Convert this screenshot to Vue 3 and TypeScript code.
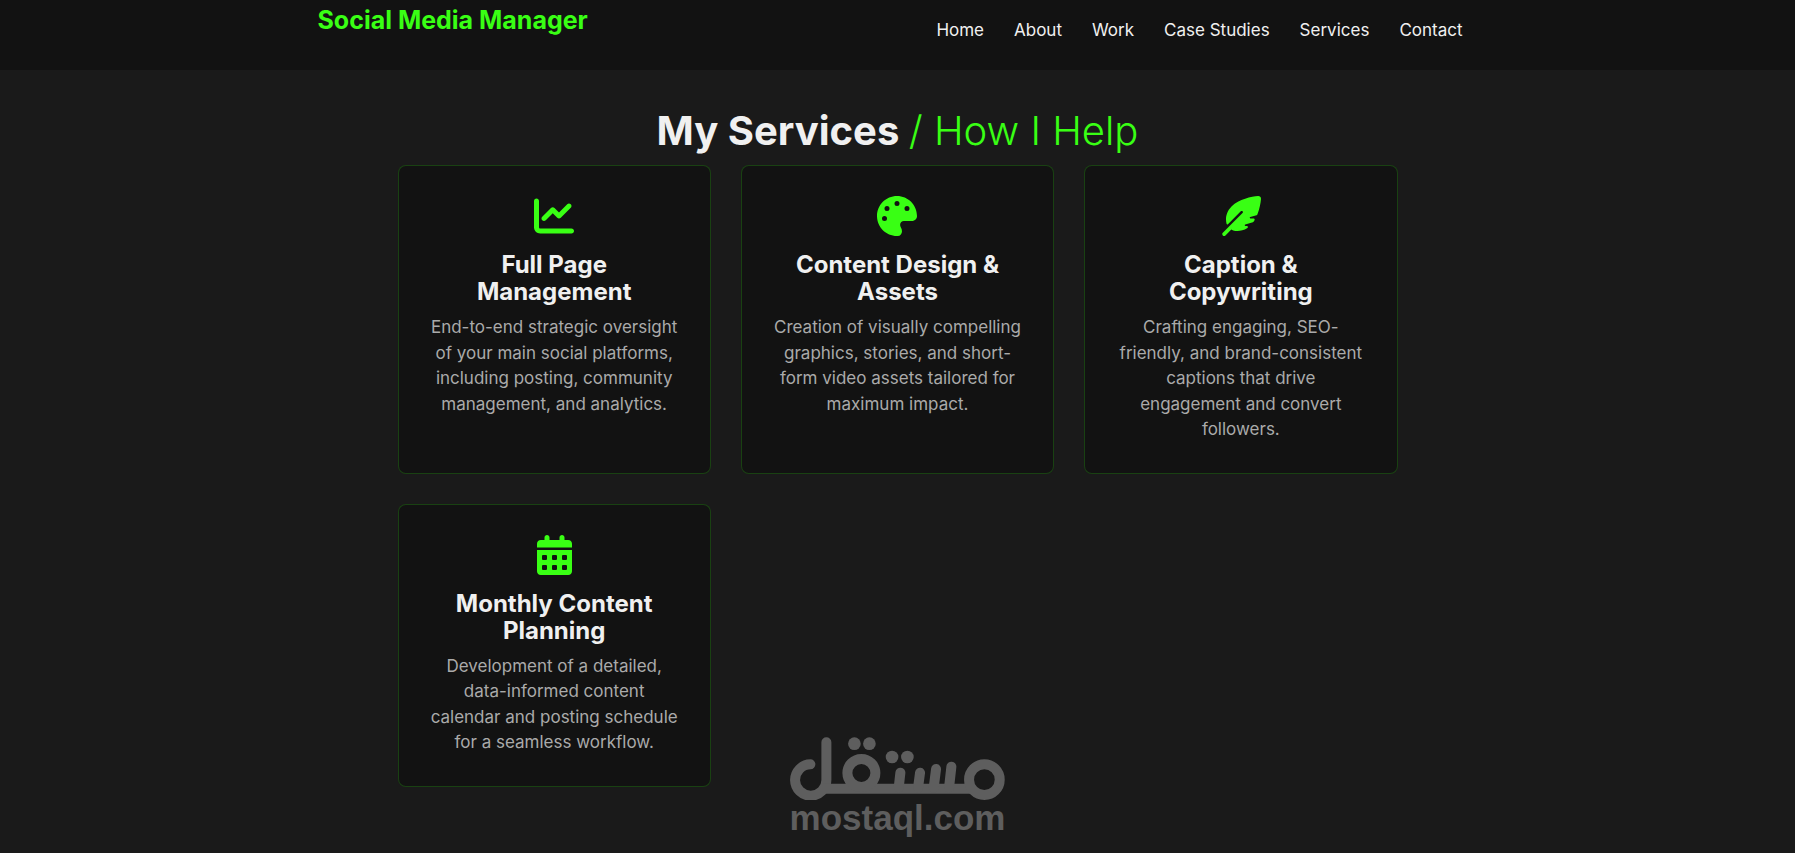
<script setup lang="ts">
interface NavLink {
  label: string
  href: string
}

interface Service {
  title: string
  text: string
  viewBox: string
  icon: string
}

const links: NavLink[] = [
  { label: 'Home', href: '#home' },
  { label: 'About', href: '#about' },
  { label: 'Work', href: '#work' },
  { label: 'Case Studies', href: '#case-studies' },
  { label: 'Services', href: '#services' },
  { label: 'Contact', href: '#contact' },
]

const services: Service[] = [
  {
    title: 'Full Page Management',
    text: 'End-to-end strategic oversight of your main social platforms, including posting, community management, and analytics.',
    viewBox: '0 0 512 512',
    icon: 'M64 64c0-17.7-14.3-32-32-32S0 46.3 0 64V400c0 44.2 35.8 80 80 80H480c17.7 0 32-14.3 32-32s-14.3-32-32-32H80c-8.8 0-16-7.2-16-16V64zm406.6 86.6c12.5-12.5 12.5-32.8 0-45.3s-32.8-12.5-45.3 0L320 210.7l-57.4-57.4c-12.5-12.5-32.8-12.5-45.3 0l-112 112c-12.5 12.5-12.5 32.8 0 45.3s32.8 12.5 45.3 0L240 221.3l57.4 57.4c12.5 12.5 32.8 12.5 45.3 0l128-128z',
  },
  {
    title: 'Content Design & Assets',
    text: 'Creation of visually compelling graphics, stories, and short-form video assets tailored for maximum impact.',
    viewBox: '0 0 512 512',
    icon: 'M512 256c0 .9 0 1.8 0 2.7c-.4 36.5-33.6 61.3-70.1 61.3H344c-26.5 0-48 21.5-48 48c0 3.4 .4 6.7 1 9.9c2.1 10.2 6.5 20 10.8 29.9c6.1 13.8 12.1 27.5 12.1 42c0 31.8-21.6 60.7-53.4 62c-3.5 .1-7 .2-10.6 .2C114.6 512 0 397.4 0 256S114.6 0 256 0S512 114.6 512 256zM128 288a32 32 0 1 0 -64 0 32 32 0 1 0 64 0zm0-96a32 32 0 1 0 0-64 32 32 0 1 0 0 64zM288 96a32 32 0 1 0 -64 0 32 32 0 1 0 64 0zm96 96a32 32 0 1 0 0-64 32 32 0 1 0 0 64z',
  },
  {
    title: 'Caption & Copywriting',
    text: 'Crafting engaging, SEO-friendly, and brand-consistent captions that drive engagement and convert followers.',
    viewBox: '0 0 512 512',
    icon: 'M278.5 215.6L23 471c-9.4 9.4-9.4 24.6 0 33.9s24.6 9.4 33.9 0l74.8-74.8c7.4 4.6 15.3 8.2 23.8 10.5C200.3 452.8 270 454.5 338 409.4c12.2-8.1 5.8-25.4-8.8-25.4l-16.1 0c-5.1 0-9.2-4.1-9.2-9.2c0-4.1 2.7-7.6 6.5-8.8l97.7-29.3c3.4-1 6.4-3.1 8.4-6.1c4.4-6.4 8.6-12.9 12.6-19.6c6.2-10.3-1.5-23-13.5-23l-38.6 0c-5.1 0-9.2-4.1-9.2-9.2c0-4.1 2.7-7.6 6.5-8.8l80.9-24.3c4.6-1.4 8.4-4.8 10.2-9.3C494.5 163 507.8 86.1 511.9 36.8c.8-9.9-3-19.6-10-26.6s-16.7-10.8-26.6-10C391.5 7 228.5 40.5 137.4 131.6C57.3 211.7 56.7 302.3 71.3 356.4c2.1 7.9 12 9.6 17.8 3.8L253.6 195.8c6.2-6.2 16.4-6.2 22.6 0c5.4 5.4 6.1 13.6 2.2 19.8z',
  },
  {
    title: 'Monthly Content Planning',
    text: 'Development of a detailed, data-informed content calendar and posting schedule for a seamless workflow.',
    viewBox: '0 0 448 512',
    icon: 'M128 0c17.7 0 32 14.3 32 32V64H288V32c0-17.7 14.3-32 32-32s32 14.3 32 32V64h48c26.5 0 48 21.5 48 48v48H0V112C0 85.5 21.5 64 48 64H96V32c0-17.7 14.3-32 32-32zM0 192H448V464c0 26.5-21.5 48-48 48H48c-26.5 0-48-21.5-48-48V192zm64 80v32c0 8.8 7.2 16 16 16h32c8.8 0 16-7.2 16-16V272c0-8.8-7.2-16-16-16H80c-8.8 0-16 7.2-16 16zm128 0v32c0 8.8 7.2 16 16 16h32c8.8 0 16-7.2 16-16V272c0-8.8-7.2-16-16-16H208c-8.8 0-16 7.2-16 16zm144-16c-8.8 0-16 7.2-16 16v32c0 8.8 7.2 16 16 16h32c8.8 0 16-7.2 16-16V272c0-8.8-7.2-16-16-16H336zM64 400v32c0 8.8 7.2 16 16 16h32c8.8 0 16-7.2 16-16V400c0-8.8-7.2-16-16-16H80c-8.8 0-16 7.2-16 16zm144-16c-8.8 0-16 7.2-16 16v32c0 8.8 7.2 16 16 16h32c8.8 0 16-7.2 16-16V400c0-8.8-7.2-16-16-16H208zm112 16v32c0 8.8 7.2 16 16 16h32c8.8 0 16-7.2 16-16V400c0-8.8-7.2-16-16-16H336c-8.8 0-16 7.2-16 16z',
  },
]
</script>

<template>
  <div class="page">
    <header class="site-header">
      <div class="bar">
        <a class="brand" href="#home">Social Media Manager</a>
        <nav aria-label="Main">
          <ul class="nav-list">
            <li v-for="link in links" :key="link.label">
              <a :href="link.href">{{ link.label }}</a>
            </li>
          </ul>
        </nav>
      </div>
    </header>

    <main class="services">
      <h1 class="title">My Services <span class="accent">/ How I Help</span></h1>
      <div class="grid">
        <article v-for="service in services" :key="service.title" class="card">
          <svg class="icon" :viewBox="service.viewBox" aria-hidden="true">
            <path :d="service.icon" />
          </svg>
          <h2>{{ service.title }}</h2>
          <p>{{ service.text }}</p>
        </article>
      </div>
    </main>

    <div class="watermark">
      <svg class="mark" viewBox="30 36 645 190" aria-hidden="true">
        <g fill="none" stroke="currentColor" stroke-width="30" stroke-linecap="round">
          <path d="M91 118A47 47 0 1 0 139 165V52" />
          <path d="M130 191H580" stroke-linecap="butt" />
          <circle cx="244" cy="144" r="42" />
          <circle cx="613" cy="164" r="46" />
          <path d="M361 143L356 188M420 143L414 188M468 132L461 188M514 125L507 188" />
        </g>
        <g fill="currentColor">
          <circle cx="223" cy="56" r="19" />
          <circle cx="268" cy="56" r="19" />
          <circle cx="336" cy="96" r="19" />
          <circle cx="382" cy="96" r="19" />
        </g>
      </svg>
      <span class="domain">mostaql.com</span>
    </div>
  </div>
</template>

<style>
body {
  margin: 0;
  background: #1a1a1a;
}
</style>

<style scoped>
.page {
  position: relative;
  box-sizing: border-box;
  min-height: 100vh;
  background: #1a1a1a;
  color: #f0f0f0;
  font-family: Inter, 'Open Sans', sans-serif;
  font-size: 17px;
}

.site-header {
  background: #121212;
}

.bar {
  display: flex;
  justify-content: space-between;
  align-items: flex-start;
  box-sizing: border-box;
  max-width: 1160px;
  min-height: 70px;
  margin: 0 auto;
}

.brand {
  color: #39ff14;
  font-size: 25px;
  font-weight: 700;
  line-height: 40px;
  text-decoration: none;
}

.nav-list {
  display: flex;
  margin: 0;
  padding: 17px 0 0;
  list-style: none;
}

.nav-list li {
  margin: 0 15px;
  line-height: 27px;
}

.nav-list a {
  color: #f0f0f0;
  text-decoration: none;
}

.services {
  max-width: 1000px;
  margin: 0 auto;
  padding: 31px 0 66px;
}

.title {
  margin: 0 0 5px;
  font-size: 40px;
  font-weight: 700;
  line-height: 59px;
  text-align: center;
}

.accent {
  color: #39ff14;
  font-weight: 300;
}

.grid {
  display: grid;
  grid-template-columns: repeat(3, 1fr);
  gap: 30px;
}

.card {
  padding: 30px;
  border: 1px solid rgba(57, 255, 20, 0.2);
  border-radius: 8px;
  background: #121212;
  text-align: center;
}

.icon {
  display: block;
  height: 40px;
  margin: 0 auto 15px;
  fill: #39ff14;
}

.card h2 {
  margin: 0 0 10px;
  font-size: 24px;
  font-weight: 700;
  line-height: 27px;
}

.card p {
  margin: 0;
  color: #aaaaaa;
  line-height: 1.5;
}

.watermark {
  position: absolute;
  bottom: 17px;
  left: 50%;
  display: flex;
  flex-direction: column;
  align-items: center;
  color: #5e5e5e;
  transform: translateX(-50%);
}

.mark {
  display: block;
  width: 215px;
}

.domain {
  font-family: 'Liberation Sans', Arial, sans-serif;
  font-size: 35px;
  font-weight: 700;
  line-height: 36px;
}
</style>
